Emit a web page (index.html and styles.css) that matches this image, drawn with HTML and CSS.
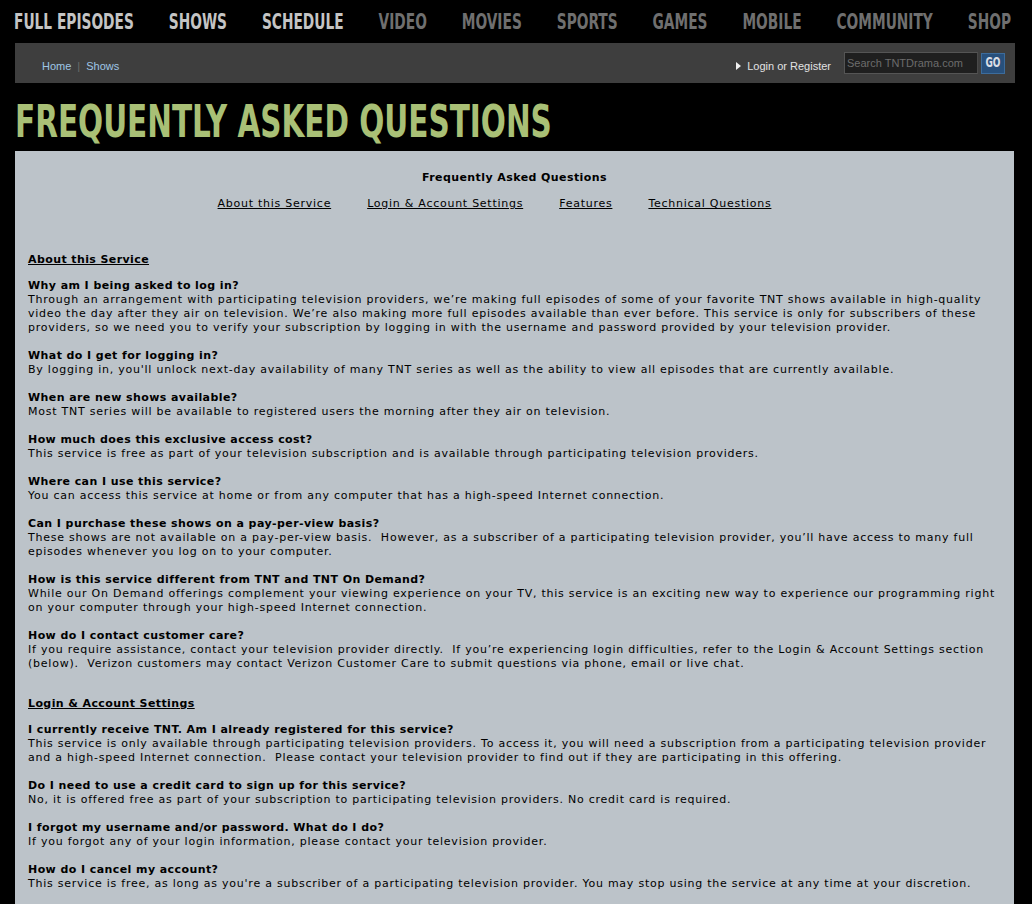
FILE: index.html
```html
<!DOCTYPE html>
<html lang="en">
<head>
<meta charset="utf-8">
<title>Frequently Asked Questions</title>
<link rel="stylesheet" href="styles.css">
</head>
<body>
<header class="topnav">
  <a class="nav-item lit" href="#"><span>FULL EPISODES</span></a>
  <a class="nav-item lit" href="#"><span>SHOWS</span></a>
  <a class="nav-item lit" href="#"><span>SCHEDULE</span></a>
  <a class="nav-item" href="#"><span>VIDEO</span></a>
  <a class="nav-item" href="#"><span>MOVIES</span></a>
  <a class="nav-item" href="#"><span>SPORTS</span></a>
  <a class="nav-item" href="#"><span>GAMES</span></a>
  <a class="nav-item" href="#"><span>MOBILE</span></a>
  <a class="nav-item" href="#"><span>COMMUNITY</span></a>
  <a class="nav-item" href="#"><span>SHOP</span></a>
</header>

<div class="crumbbar">
  <div class="crumbs">
    <a href="#">Home</a><span class="sep">|</span><a href="#">Shows</a>
  </div>
  <div class="tools">
    <a class="login" href="#"><i class="tri"></i>Login or Register</a>
    <div class="search">
      <input class="search-input" type="text" placeholder="Search TNTDrama.com">
      <button class="go" type="button"><span>GO</span></button>
    </div>
  </div>
</div>

<div class="page-title"><h1><span>FREQUENTLY ASKED QUESTIONS</span></h1></div>

<main class="panel">
  <h2 class="faq-title">Frequently Asked Questions</h2>
  <nav class="toc">
    <a href="#about">About this Service</a><a href="#login">Login &amp; Account Settings</a><a href="#features">Features</a><a href="#tech">Technical Questions</a>
  </nav>

  <section class="sec first" id="about">
    <h3 class="sec-title">About this Service</h3>
    <div class="qa-list">
      <div class="qa"><h4 class="q">Why am I being asked to log in?</h4><p class="a">Through an arrangement with participating television providers, we’re making full episodes of some of your favorite TNT shows available in high-quality<br>video the day after they air on television. We’re also making more full episodes available than ever before. This service is only for subscribers of these<br>providers, so we need you to verify your subscription by logging in with the username and password provided by your television provider.</p></div>
      <div class="qa"><h4 class="q">What do I get for logging in?</h4><p class="a">By logging in, you'll unlock next-day availability of many TNT series as well as the ability to view all episodes that are currently available.</p></div>
      <div class="qa"><h4 class="q">When are new shows available?</h4><p class="a">Most TNT series will be available to registered users the morning after they air on television.</p></div>
      <div class="qa"><h4 class="q">How much does this exclusive access cost?</h4><p class="a">This service is free as part of your television subscription and is available through participating television providers.</p></div>
      <div class="qa"><h4 class="q">Where can I use this service?</h4><p class="a">You can access this service at home or from any computer that has a high-speed Internet connection.</p></div>
      <div class="qa"><h4 class="q">Can I purchase these shows on a pay-per-view basis?</h4><p class="a">These shows are not available on a pay-per-view basis.&nbsp; However, as a subscriber of a participating television provider, you’ll have access to many full<br>episodes whenever you log on to your computer.</p></div>
      <div class="qa"><h4 class="q">How is this service different from TNT and TNT On Demand?</h4><p class="a">While our On Demand offerings complement your viewing experience on your TV, this service is an exciting new way to experience our programming right<br>on your computer through your high-speed Internet connection.</p></div>
      <div class="qa"><h4 class="q">How do I contact customer care?</h4><p class="a">If you require assistance, contact your television provider directly.&nbsp; If you’re experiencing login difficulties, refer to the Login &amp; Account Settings section<br>(below).&nbsp; Verizon customers may contact Verizon Customer Care to submit questions via phone, email or live chat.</p></div>
    </div>
  </section>

  <section class="sec" id="login">
    <h3 class="sec-title">Login &amp; Account Settings</h3>
    <div class="qa-list">
      <div class="qa"><h4 class="q">I currently receive TNT. Am I already registered for this service?</h4><p class="a">This service is only available through participating television providers. To access it, you will need a subscription from a participating television provider<br>and a high-speed Internet connection.&nbsp; Please contact your television provider to find out if they are participating in this offering.</p></div>
      <div class="qa"><h4 class="q">Do I need to use a credit card to sign up for this service?</h4><p class="a">No, it is offered free as part of your subscription to participating television providers. No credit card is required.</p></div>
      <div class="qa"><h4 class="q">I forgot my username and/or password. What do I do?</h4><p class="a">If you forgot any of your login information, please contact your television provider.</p></div>
      <div class="qa"><h4 class="q">How do I cancel my account?</h4><p class="a">This service is free, as long as you're a subscriber of a participating television provider. You may stop using the service at any time at your discretion.</p></div>
    </div>
  </section>
</main>
</body>
</html>
```

FILE: styles.css
```css
* { box-sizing: border-box; }

html, body {
  margin: 0;
  padding: 0;
  background: #000;
}

body {
  font-family: "DejaVu Sans", Verdana, sans-serif;
  font-size: 11px;
  line-height: 14px;
  color: #000;
}

a { text-decoration: none; }

/* ---------- top navigation ---------- */
.topnav {
  height: 43px;
  display: flex;
  justify-content: space-between;
  align-items: flex-start;
  padding: 13px 21px 0 14px;
}

.nav-item {
  display: block;
  height: 22px;
  font-family: "DejaVu Sans Condensed", "DejaVu Sans", sans-serif;
  font-weight: bold;
  font-size: 15.3px;
  line-height: 15.3px;
  color: #6f6f6f;
}

.nav-item span {
  display: inline-block;
  transform: scaleY(1.36);
  transform-origin: 0 0;
}

.nav-item.lit { color: #c4c4c4; }

/* ---------- breadcrumb bar ---------- */
.crumbbar {
  margin: 0 17px 0 15px;
  height: 40px;
  background: #3e3e3e;
  display: flex;
  align-items: center;
  justify-content: space-between;
  padding: 0 10px 0 27px;
  font-family: "Liberation Sans", Arial, sans-serif;
  font-size: 11px;
}

.crumbs {
  padding-top: 5px;
  color: #9ec6e6;
}

.crumbs a { color: #9ec6e6; }

.crumbs .sep {
  color: #6c6c6c;
  margin: 0 6px;
}

.tools {
  display: flex;
  align-items: center;
}

.login {
  display: flex;
  align-items: center;
  color: #e2e2e2;
  font-size: 11px;
  padding-top: 5px;
  margin-right: 13px;
}

.login .tri {
  display: block;
  width: 0;
  height: 0;
  border-top: 4px solid transparent;
  border-bottom: 4px solid transparent;
  border-left: 5px solid #f0f0f0;
  margin-right: 6px;
}

.search {
  display: flex;
  align-items: center;
  gap: 3px;
}

.search-input {
  width: 134px;
  height: 22px;
  background: #1f1f1f;
  border: 1px solid #555;
  border-right-color: #4a4a4a;
  color: #ccc;
  font-family: "Liberation Sans", Arial, sans-serif;
  font-size: 11px;
  padding: 0 2px;
  outline: none;
}

.search-input::placeholder { color: #6c6c6c; }

.go {
  width: 24px;
  height: 21px;
  background: #28507c;
  border: 1px solid #3c6c9c;
  padding: 0;
  color: #d8dde4;
  font-family: "DejaVu Sans Condensed", "DejaVu Sans", sans-serif;
  font-weight: bold;
  font-size: 10px;
  line-height: 10px;
}

.go span {
  display: inline-block;
  transform: scaleY(1.35);
}

/* ---------- page title ---------- */
.page-title {
  height: 68px;
  padding: 17px 0 0 15px;
}

.page-title h1 {
  margin: 0;
  font-family: "DejaVu Sans Condensed", "DejaVu Sans", sans-serif;
  font-weight: bold;
  font-size: 32.8px;
  line-height: 32.8px;
  color: #a9c076;
}

.page-title h1 span {
  display: inline-block;
  transform: scaleY(1.38);
  transform-origin: 0 0;
}

/* ---------- content panel ---------- */
.panel {
  margin: 0 18px 0 15px;
  background: #bcc3c9;
  padding: 20px 5px 30px 13px;
}

.faq-title {
  margin: 0;
  text-align: center;
  font-size: 11px;
  font-weight: bold;
  line-height: 14px;
  letter-spacing: 0.42px;
  padding-right: 8px;
}

.toc {
  margin-top: 12px;
  text-align: center;
  padding-right: 12px;
  letter-spacing: 0.74px;
}

.toc a {
  color: #000;
  text-decoration: underline;
  margin-right: 36px;
}

.sec { margin-top: 26px; }
.sec.first { margin-top: 42px; }

.sec-title {
  margin: 0 0 12px 0;
  font-size: 11px;
  font-weight: bold;
  text-decoration: underline;
  line-height: 14px;
  letter-spacing: 0.4px;
}

.qa-list {
  display: flex;
  flex-direction: column;
  gap: 14px;
}

.q {
  margin: 0;
  font-size: 11px;
  font-weight: bold;
  line-height: 14px;
  letter-spacing: 0.42px;
}

.a {
  margin: 0;
  line-height: 14px;
  letter-spacing: 0.76px;
}
```
